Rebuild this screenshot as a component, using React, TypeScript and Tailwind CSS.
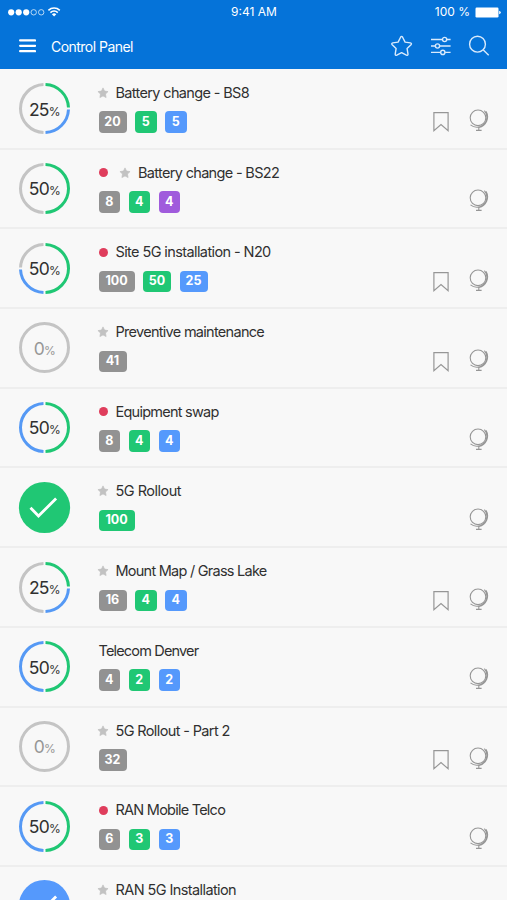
type Tone = "gray" | "green" | "blue" | "purple";

interface Arc {
    tone: "gray" | "green" | "blue";
    from: number;
    to: number;
}

interface Task {
    title: string;
    titleClass: string;
    percent?: number;
    done?: "green" | "blue";
    arcs?: Arc[];
    alert?: boolean;
    star?: boolean;
    bookmark?: boolean;
    badges: [number, Tone][];
}

const HALF_GREEN: Arc[] = [
    { tone: "green", from: 0, to: 180 },
    { tone: "gray", from: 180, to: 360 },
];
const HALF_BLUE: Arc[] = [
    { tone: "green", from: 0, to: 180 },
    { tone: "blue", from: 180, to: 360 },
];
const QUARTERS: Arc[] = [
    { tone: "green", from: 0, to: 90 },
    { tone: "blue", from: 90, to: 180 },
    { tone: "gray", from: 180, to: 360 },
];
const THREE_WAY: Arc[] = [
    { tone: "green", from: 0, to: 180 },
    { tone: "blue", from: 180, to: 270 },
    { tone: "gray", from: 270, to: 360 },
];

const tasks: Task[] = [
    { title: "Battery change - BS8", titleClass: "tracking-[-0.65px]", percent: 25, arcs: QUARTERS, star: true, bookmark: true, badges: [[20, "gray"], [5, "green"], [5, "blue"]] },
    { title: "Battery change - BS22", titleClass: "tracking-[-0.67px]", percent: 50, arcs: HALF_GREEN, alert: true, star: true, badges: [[8, "gray"], [4, "green"], [4, "purple"]] },
    { title: "Site 5G installation - N20", titleClass: "tracking-[-0.6px]", percent: 50, arcs: THREE_WAY, alert: true, bookmark: true, badges: [[100, "gray"], [50, "green"], [25, "blue"]] },
    { title: "Preventive maintenance", titleClass: "tracking-[-0.71px]", percent: 0, star: true, bookmark: true, badges: [[41, "gray"]] },
    { title: "Equipment swap", titleClass: "tracking-[-0.75px]", percent: 50, arcs: HALF_BLUE, alert: true, badges: [[8, "gray"], [4, "green"], [4, "blue"]] },
    { title: "5G Rollout", titleClass: "tracking-[-0.5px]", done: "green", star: true, badges: [[100, "green"]] },
    { title: "Mount Map / Grass Lake", titleClass: "tracking-[-0.75px]", percent: 25, arcs: QUARTERS, star: true, bookmark: true, badges: [[16, "gray"], [4, "green"], [4, "blue"]] },
    { title: "Telecom Denver", titleClass: "tracking-[-0.83px]", percent: 50, arcs: HALF_BLUE, badges: [[4, "gray"], [2, "green"], [2, "blue"]] },
    { title: "5G Rollout - Part 2", titleClass: "tracking-[-0.63px]", percent: 0, star: true, bookmark: true, badges: [[32, "gray"]] },
    { title: "RAN Mobile Telco", titleClass: "tracking-[-0.76px]", percent: 50, arcs: HALF_BLUE, alert: true, badges: [[6, "gray"], [3, "green"], [3, "blue"]] },
    { title: "RAN 5G Installation", titleClass: "tracking-[-0.59px]", done: "blue", star: true, badges: [] },
];

const badgeColors: Record<Tone, string> = {
    gray: "bg-[#929292]",
    green: "bg-[#20c774]",
    blue: "bg-[#5599fc]",
    purple: "bg-[#a05bdc]",
};

const badgeWidths = ["w-[21.5px]", "w-[28px]", "w-[36px]"];

const arcColors = { gray: "#c4c4c4", green: "#20c774", blue: "#5599f5" };

function arcPath({ from, to }: Arc) {
    const r = 24;
    const gap = 2.4;
    const point = (deg: number) => {
        const a = ((deg - 90) * Math.PI) / 180;
        return `${26.5 + r * Math.cos(a)} ${26.5 + r * Math.sin(a)}`;
    };
    return `M${point(from + gap)} A${r} ${r} 0 0 1 ${point(to - gap)}`;
}

function Progress({ task }: { task: Task }) {
    if (task.done) {
        return (
            <svg className="size-[53px] shrink-0" viewBox="0 0 53 53" fill="none">
                <circle cx="26.5" cy="26.5" r="25.6" fill={task.done === "green" ? "#20c774" : "#5599fc"} />
                <path d="M12.5 26.7l8 8.3L38.1 17.5" stroke="#fff" strokeWidth="2.8" />
            </svg>
        );
    }
    const empty = task.percent === 0;
    return (
        <div className="relative flex size-[53px] shrink-0 items-center justify-center">
            <svg className="absolute inset-0 size-[53px]" viewBox="0 0 53 53" fill="none" strokeWidth="3">
                {empty && <circle cx="26.5" cy="26.5" r="24" stroke="#c4c4c4" />}
                {task.arcs?.map((arc) => (
                    <path key={arc.from} d={arcPath(arc)} stroke={arcColors[arc.tone]} />
                ))}
            </svg>
            <span className={`relative flex items-baseline pt-px leading-none ${empty ? "text-[#969696]" : "text-[#303030]"}`}>
                <span className="text-[17.5px] tracking-[-0.8px]">{task.percent}</span>
                <span className="text-[12px] tracking-[-0.5px]">%</span>
            </span>
        </div>
    );
}

function SmallStar() {
    return (
        <svg className="-ml-0.5 size-3 shrink-0" viewBox="0 0 12 12">
            <path
                d="M6 .9l1.55 3.2 3.5.5-2.55 2.45.6 3.5L6 8.9l-3.1 1.65.6-3.5L.95 4.6l3.5-.5z"
                fill="#c2c2c2"
                stroke="#c2c2c2"
                strokeWidth=".7"
                strokeLinejoin="round"
            />
        </svg>
    );
}

function Bookmark() {
    return (
        <svg className="h-5 w-4" viewBox="0 0 16 20" fill="none" stroke="#969696" strokeWidth="1.2">
            <path d="M.9.6h14.2v18L8 12.6.9 18.6z" />
        </svg>
    );
}

function Globe() {
    return (
        <svg className="h-6 w-5" viewBox="0 0 20 24" fill="none" stroke="#969696" strokeWidth="1.1">
            <circle cx="9" cy="8.8" r="7.8" />
            <path d="M15.4 1.6a10 10 0 0 1-13.9 14.3M17 2.4a10.7 10.7 0 0 1-7 16M9.8 18.2v3M7 21.4h5.600" />
        </svg>
    );
}

function Row({ task }: { task: Task }) {
    return (
        <li className="flex h-[79.72px] shrink-0 items-center border-b-2 border-[#eeeeee] pr-[18px] pl-[18px]">
            <Progress task={task} />
            <div className="ml-[27.5px] flex h-full flex-1 flex-col pt-[13px]">
                <div className="flex h-5 items-center">
                    {task.alert && <span className={`size-[9px] rounded-full bg-[#df3d5c] ${task.star ? "mr-[13.5px]" : "mr-[8px]"}`} />}
                    {task.star && (
                        <span className="mr-[7px]">
                            <SmallStar />
                        </span>
                    )}
                    <span className={`text-[14.5px] leading-5 whitespace-nowrap text-[#303030] ${task.titleClass}`}>{task.title}</span>
                </div>
                <div className="mt-[8.5px] flex gap-[8.5px]">
                    {task.badges.map(([value, tone], i) => (
                        <span
                            key={i}
                            className={`flex h-[21.5px] items-center justify-center rounded-[4px] text-[12.5px] leading-none font-bold text-white ${badgeWidths[String(value).length - 1]} ${badgeColors[tone]}`}
                        >
                            {value}
                        </span>
                    ))}
                </div>
            </div>
            <div className="flex gap-[20px] self-start pt-[39.5px]">
                {task.bookmark && (
                    <span className="pt-[3px]">
                        <Bookmark />
                    </span>
                )}
                <Globe />
            </div>
        </li>
    );
}

function StatusBar() {
    return (
        <div className="grid h-6 grid-cols-3 items-center pr-[6px] pl-[8px] text-[12px] text-white">
            <svg className="h-3 w-14" viewBox="0 0 56 12" fill="none" stroke="#fff">
                <g fill="#fff" stroke="none">
                    <circle cx="3.2" cy="6.3" r="3.1" />
                    <circle cx="10.7" cy="6.3" r="3.1" />
                    <circle cx="18.2" cy="6.3" r="3.1" />
                </g>
                <g strokeWidth=".7">
                    <circle cx="25.7" cy="6.3" r="2.7" />
                    <circle cx="33.2" cy="6.3" r="2.7" />
                </g>
                <path d="M40.4 4.3a8.4 8.4 0 0 1 11.4 0M42.4 6.6a5.4 5.4 0 0 1 7.4 0" strokeWidth="1.6" />
                <path d="M43.9 8.2a3.3 3.3 0 0 1 4.4 0L46.1 10.5z" fill="#fff" stroke="none" />
            </svg>
            <span className="pr-px text-center">9:41 AM</span>
            <div className="flex items-center justify-end gap-[5px]">
                <span>100 %</span>
                <svg className="h-[11px] w-[26px]" viewBox="0 0 26 11" fill="#fff">
                    <rect x=".5" y=".6" width="23" height="9.8" rx="1.2" />
                    <path d="M24.2 3.7q1.6.5 1.6 1.8t-1.6 1.8z" />
                </svg>
            </div>
        </div>
    );
}

export default function App() {
    return (
        <div className="flex h-[900px] w-full flex-col overflow-hidden bg-[#f8f8f8] font-[Inter,sans-serif]">
            <header className="h-[69px] shrink-0 bg-[#0573d9]">
                <StatusBar />
                <div className="flex h-[44px] items-center pr-[17px] pl-[19px] text-white">
                    <svg className="h-4 w-[17px]" viewBox="0 0 17 16" stroke="#fff" strokeWidth="2.2" strokeLinecap="round">
                        <path d="M1.1 2.4h15M1.1 7.8h15M1.1 13.2h15" />
                    </svg>
                    <h1 className="ml-[15px] flex-1 text-[14px] tracking-[-0.53px]">Control Panel</h1>
                    <svg className="size-6" viewBox="0 0 24 24" fill="none" stroke="#d9eafc" strokeWidth="1.4" strokeLinejoin="round">
                        <path d="M10.6 3.2q1-1.7 2 0l2.5 4.9 5.3.8q1.8.5.6 1.8l-3.900 3.900.900 5.600q-.1 1.600-1.600 1l-4.800-2.500-4.800 2.500q-1.500.600-1.600-1l.900-5.600-3.900-3.900q-1.200-1.300.600-1.800l5.300-.800z" />
                    </svg>
                    <svg className="ml-[16px] h-5 w-[22px]" viewBox="0 0 22 20" fill="none" stroke="#d9eafc" strokeWidth="1.4">
                        <path d="M1 3.5h11.3M16.9 3.5H20.6M1 10h4.2M9.8 10h10.8M1 16.4h9.5M15.1 16.4h5.5" />
                        <circle cx="14.6" cy="3.5" r="2.1" />
                        <circle cx="7.5" cy="10" r="2.1" />
                        <circle cx="12.8" cy="16.4" r="2.1" />
                    </svg>
                    <svg className="ml-[16px] size-[22px]" viewBox="0 0 22 22" fill="none" stroke="#d9eafc" strokeWidth="1.4">
                        <circle cx="9.5" cy="9.2" r="7.9" />
                        <path d="M15.1 14.8l5.6 5.4" />
                    </svg>
                </div>
            </header>
            <ul className="flex flex-col pt-[0.9px]">
                {tasks.map((task) => (
                    <Row key={task.title} task={task} />
                ))}
            </ul>
        </div>
    );
}
